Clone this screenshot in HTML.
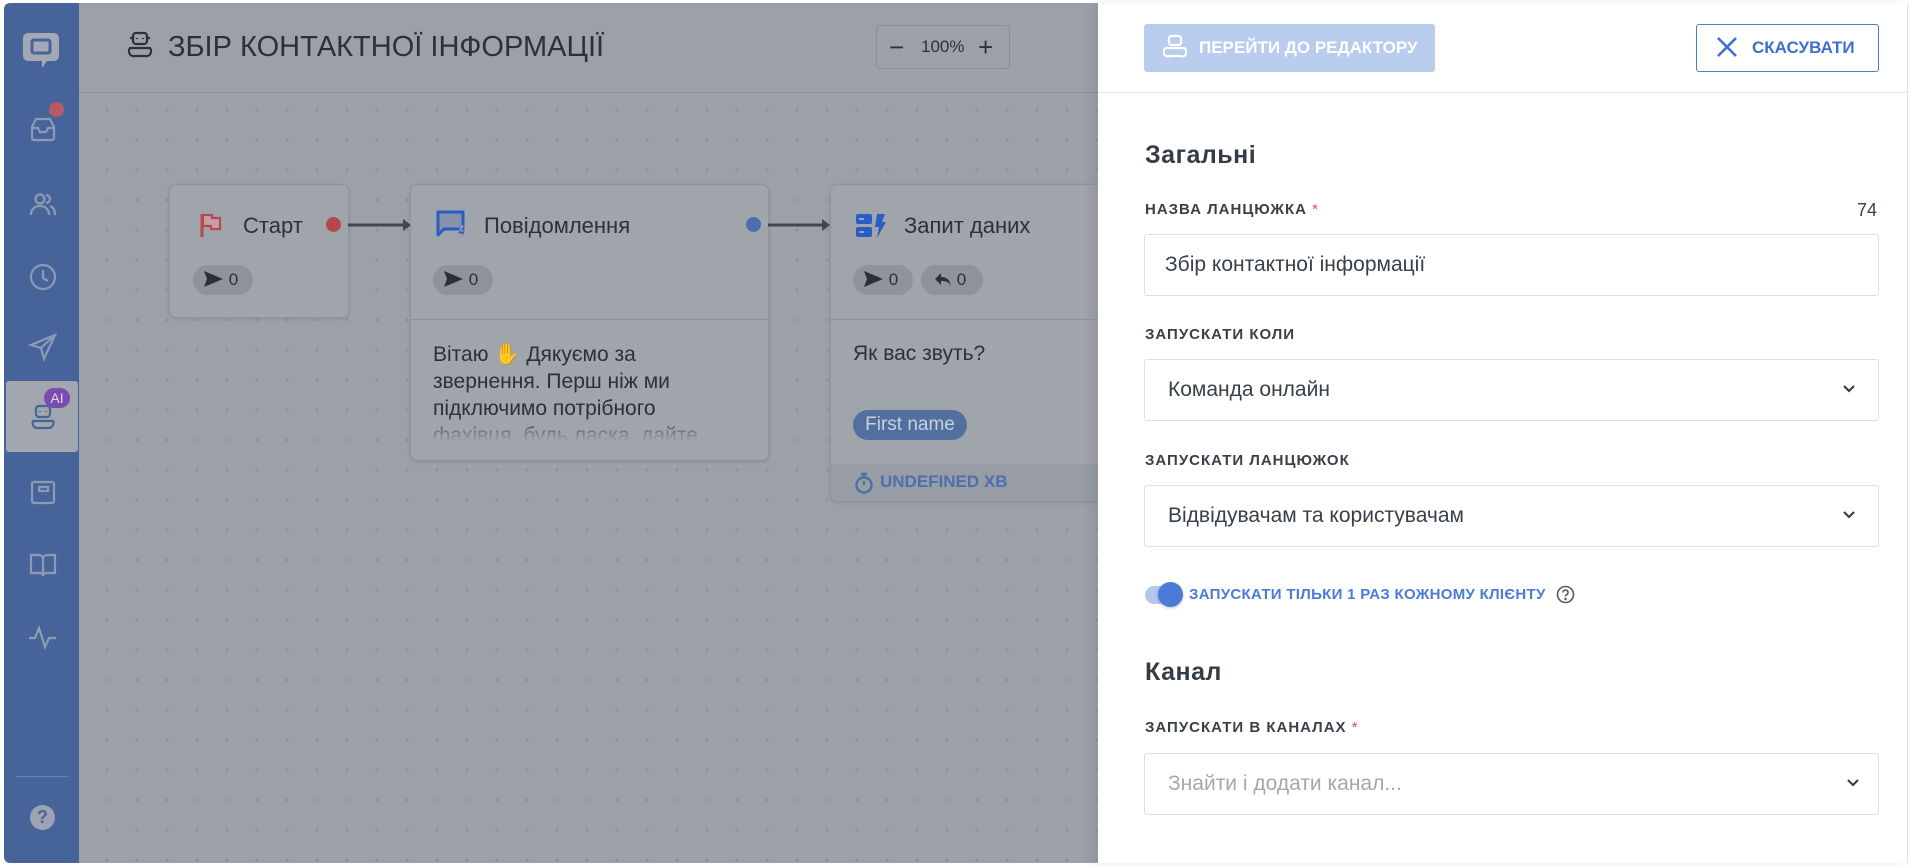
<!DOCTYPE html>
<html><head><meta charset="utf-8">
<style>
*{box-sizing:border-box;margin:0;padding:0}
body{width:1911px;height:867px;background:#fff;font-family:"Liberation Sans",sans-serif;position:relative;overflow:hidden;color:#2b313b}
.abs{position:absolute}
#side{left:4px;top:3px;width:75px;height:860px;background:#47649a;border-radius:6px 0 0 6px}
#canvas{left:79px;top:3px;width:1020px;height:860px;background-color:#9ca0a8;
background-image:radial-gradient(circle,#8d9199 1.3px,transparent 1.6px);background-size:30px 30px;background-position:13px 2px}
#hdr{left:79px;top:3px;width:1020px;height:90px;background:#9ca0a8;border-bottom:1px solid #8f939b}
.node{background:#a0a4ab;border:1px solid #8f939b;border-radius:7px;box-shadow:0 1px 3px rgba(0,0,0,.12)}
.pill{position:absolute;height:30px;border-radius:15px;background:#8f939a;font-size:17px;color:#2b313b;line-height:30px;padding-left:10px}
.ntitle{position:absolute;font-size:22px;color:#2b313b}
#panel{left:1098px;top:3px;width:810px;height:860px;background:#fff;box-shadow:-6px 0 12px rgba(0,0,0,.08);border-right:1px solid #e3e3e3}
.lbl{position:absolute;left:1145px;font-size:15px;letter-spacing:1px;color:#3a4049;font-weight:bold}
.inp{position:absolute;left:1144px;width:735px;height:62px;border:1px solid #dcdfe4;border-radius:3px;font-size:21px;color:#3a4049;line-height:60px;padding-left:23px}
.chev{position:absolute;right:22px;top:24px}
.h2{position:absolute;left:1145px;font-size:25px;font-weight:bold;color:#363c45;letter-spacing:.5px}
.star{color:#e05252;font-weight:normal}
</style></head><body>
<div id="side" class="abs">
 <svg class="abs" style="left:18px;top:28px" width="40" height="44" viewBox="0 0 40 44"><path d="M6 2h26a5 5 0 0 1 5 5v18a5 5 0 0 1-5 5h-7l-5 7v-7H6a5 5 0 0 1-5-5V7a5 5 0 0 1 5-5z" fill="#a3a8b2"/><rect x="10" y="9" width="18" height="13" rx="2" fill="none" stroke="#47649a" stroke-width="3"/></svg>
 <svg class="abs" style="left:24px;top:112px" width="30" height="30" viewBox="0 0 30 30" fill="none" stroke="#8d9ab4" stroke-width="2.2"><path d="M4 12l4-8h14l4 8v11a2 2 0 0 1-2 2H6a2 2 0 0 1-2-2z"/><path d="M4 13h6l2 4h6l2-4h6"/></svg>
 <div class="abs" style="left:45px;top:99px;width:15px;height:15px;border-radius:50%;background:#b65a63"></div>
 <svg class="abs" style="left:24px;top:187px" width="30" height="30" viewBox="0 0 30 30" fill="none" stroke="#8d9ab4" stroke-width="2.2"><circle cx="12" cy="9" r="4.5"/><path d="M3 25c0-6 4-9 9-9s9 3 9 9"/><path d="M18 5a4 4 0 0 1 0 8M22 16c3 1 5 4 5 9"/></svg>
 <svg class="abs" style="left:24px;top:259px" width="30" height="30" viewBox="0 0 30 30" fill="none" stroke="#8d9ab4" stroke-width="2.2"><circle cx="15" cy="15" r="12"/><path d="M15 8v8l5 3"/></svg>
 <svg class="abs" style="left:24px;top:329px" width="30" height="30" viewBox="0 0 30 30" fill="none" stroke="#8d9ab4" stroke-width="2.2"><path d="M27 3L3 13l10 3 3 11z"/><path d="M13 16L27 3"/></svg>
 <div class="abs" style="left:2px;top:378px;width:72px;height:71px;background:#a2a6ae;border-radius:3px"></div>
 <svg class="abs" style="left:24px;top:400px" width="30" height="30" viewBox="0 0 30 30" fill="none" stroke="#47649a" stroke-width="2.2"><rect x="8" y="3" width="14" height="11" rx="3"/><path d="M5 18h20a5 5 0 0 1-5 7h-10a5 5 0 0 1-5-7z"/><path d="M12 8v1M18 8v1"/></svg>
 <div class="abs" style="left:40px;top:385px;width:26px;height:20px;border-radius:10px;background:#7a4bb0;color:#ddd;font-size:14px;text-align:center;line-height:20px">AI</div>
 <svg class="abs" style="left:24px;top:475px" width="30" height="30" viewBox="0 0 30 30" fill="none" stroke="#8d9ab4" stroke-width="2.2"><rect x="4" y="4" width="22" height="21" rx="2"/><rect x="11" y="9" width="9" height="4"/></svg>
 <svg class="abs" style="left:24px;top:547px" width="30" height="30" viewBox="0 0 30 30" fill="none" stroke="#8d9ab4" stroke-width="2.2"><path d="M3 5h8a4 4 0 0 1 4 4v17a3 3 0 0 0-3-3H3zM27 5h-8a4 4 0 0 0-4 4v17a3 3 0 0 1 3-3h9z"/></svg>
 <svg class="abs" style="left:24px;top:620px" width="30" height="30" viewBox="0 0 30 30" fill="none" stroke="#8d9ab4" stroke-width="2.2"><path d="M1 15h6l4-10 6 19 4-9h7"/></svg>
 <div class="abs" style="left:11px;top:773px;width:54px;height:1px;background:#6d80a8"></div>
 <div class="abs" style="left:26px;top:802px;width:25px;height:25px;border-radius:50%;background:#9ba3b4;color:#47649a;font-weight:bold;font-size:18px;text-align:center;line-height:25px">?</div>
</div>

<div id="canvas" class="abs"></div>
<div id="hdr" class="abs"></div>
<svg class="abs" style="left:126px;top:31px" width="28" height="30" viewBox="0 0 28 30" fill="none" stroke="#2b313b" stroke-width="2.2"><rect x="7" y="2" width="14" height="11" rx="3"/><path d="M4 17h20a5 5 0 0 1-5 8H9a5 5 0 0 1-5-8z"/><path d="M11 7v1M17 7v1M4 7h3M21 7h3"/></svg>
<div class="abs" style="left:168px;top:31px;font-size:29px;color:#2b313b">ЗБІР КОНТАКТНОЇ ІНФОРМАЦІЇ</div>
<div class="abs" style="left:876px;top:25px;width:134px;height:44px;border:1px solid #8a8e96;border-radius:4px;font-size:17px;color:#2b313b;line-height:42px">
 <span class="abs" style="left:12px;font-size:26px">−</span><span class="abs" style="left:44px">100%</span><span class="abs" style="left:101px;font-size:26px">+</span></div>

<div class="node abs" style="left:169px;top:184px;width:180px;height:134px"></div>
<svg class="abs" style="left:199px;top:212px" width="24" height="26" viewBox="0 0 24 26"><path d="M3 2v23" stroke="#b74a4e" stroke-width="3"/><path d="M4 3h9v3h8v11h-9v-3H4z" fill="#c4a0a4" stroke="#b74a4e" stroke-width="2.2"/></svg>
<div class="ntitle" style="left:243px;top:213px">Старт</div>
<div class="abs" style="left:326px;top:217px;width:15px;height:15px;border-radius:50%;background:#b4494c"></div>
<svg class="abs" style="left:348px;top:217px" width="64" height="16"><path d="M0 8h58" stroke="#3f4650" stroke-width="3"/><path d="M55 2l8 6-8 6z" fill="#3f4650"/></svg>
<div class="pill" style="left:193px;top:265px;width:60px"><svg width="21" height="18" viewBox="0 0 21 18" style="vertical-align:-3px"><path d="M1 1l19 8-19 8 3-8z" fill="#2b313b"/></svg> 0</div>

<div class="node abs" style="left:410px;top:184px;width:359px;height:277px"></div>
<div class="abs" style="left:410px;top:319px;width:359px;height:1px;background:#8f939b"></div>
<svg class="abs" style="left:435px;top:209px" width="34" height="32" viewBox="0 0 34 32"><path d="M3 3h25v17H9l-6 6z" fill="#8592aa" stroke="#2a5bc7" stroke-width="3" stroke-linejoin="round"/><path d="M27 17l-5 8h5l-3 7 7-10h-5l2-5z" fill="#2a5bc7" stroke="#a0a4ab" stroke-width="1"/></svg>
<div class="ntitle" style="left:484px;top:213px">Повідомлення</div>
<div class="abs" style="left:746px;top:217px;width:15px;height:15px;border-radius:50%;background:#4c6fae"></div>
<svg class="abs" style="left:768px;top:217px" width="64" height="16"><path d="M0 8h56" stroke="#3f4650" stroke-width="3"/><path d="M54 2l8 6-8 6z" fill="#3f4650"/></svg>
<div class="pill" style="left:433px;top:265px;width:60px"><svg width="21" height="18" viewBox="0 0 21 18" style="vertical-align:-3px"><path d="M1 1l19 8-19 8 3-8z" fill="#2b313b"/></svg> 0</div>
<div class="abs" style="left:433px;top:341px;width:268px;height:100px;overflow:hidden;font-size:21px;line-height:27px;color:#2b313b;-webkit-mask-image:linear-gradient(#000 75%,transparent 100%)">Вітаю <span style="color:#8a6a3a">✋</span> Дякуємо за звернення. Перш ніж ми підключимо потрібного фахівця, будь ласка, дайте</div>

<div class="node abs" style="left:830px;top:184px;width:290px;height:318px;overflow:hidden">
 <div class="abs" style="left:0;top:134px;width:290px;height:1px;background:#8f939b"></div>
 <div class="abs" style="left:0;top:279px;width:290px;height:40px;background:#979ca5"></div>
</div>
<svg class="abs" style="left:855px;top:213px" width="32" height="26" viewBox="0 0 32 26"><rect x="1" y="1" width="16" height="10" rx="2" fill="#2a5bc7"/><rect x="1" y="14" width="16" height="10" rx="2" fill="#2a5bc7"/><rect x="4" y="5" width="5" height="2" fill="#a0a4ab"/><rect x="4" y="18" width="5" height="2" fill="#a0a4ab"/><path d="M22 1h8l-3 8h4l-9 16 2-11h-4z" fill="#2a5bc7"/></svg>
<div class="ntitle" style="left:904px;top:213px">Запит даних</div>
<div class="pill" style="left:853px;top:265px;width:60px"><svg width="21" height="18" viewBox="0 0 21 18" style="vertical-align:-3px"><path d="M1 1l19 8-19 8 3-8z" fill="#2b313b"/></svg> 0</div>
<div class="pill" style="left:921px;top:265px;width:62px;padding-left:13px"><svg width="18" height="16" viewBox="0 0 18 16" style="vertical-align:-2px"><path d="M7 2L1 8l6 6V10c5 0 8 1 10 5-1-6-4-9-10-9z" fill="#2b313b"/></svg> 0</div>
<div class="abs" style="left:853px;top:342px;font-size:21px;color:#2b313b">Як вас звуть?</div>
<div class="abs" style="left:853px;top:410px;width:114px;height:30px;border-radius:15px;background:#52709f;color:#c8d0de;font-size:19px;line-height:30px;text-align:center">First name</div>
<svg class="abs" style="left:854px;top:472px" width="20" height="22" viewBox="0 0 20 22" fill="none" stroke="#4c6fae" stroke-width="2.4"><circle cx="10" cy="13" r="7.5"/><path d="M7 2h6M10 2v4M10 13V9"/></svg>
<div class="abs" style="left:880px;top:472px;font-size:17px;font-weight:bold;color:#4c6fae">UNDEFINED ХВ</div>

<div id="panel" class="abs"></div>
<div class="abs" style="left:1098px;top:92px;width:810px;height:1px;background:#e3e3e3"></div>
<div class="abs" style="left:1144px;top:24px;width:291px;height:48px;background:#b8cdee;border-radius:3px;color:#fff;font-weight:bold;font-size:17px;line-height:48px;padding-left:55px">ПЕРЕЙТИ ДО РЕДАКТОРУ</div>
<svg class="abs" style="left:1163px;top:34px" width="24" height="27" viewBox="0 0 24 27" fill="none" stroke="#fff" stroke-width="2.2"><rect x="6" y="2" width="12" height="9" rx="2.5"/><path d="M3 14h18a4 4 0 0 1-4 8H7a4 4 0 0 1-4-8z"/></svg>
<div class="abs" style="left:1696px;top:24px;width:183px;height:48px;border:1.5px solid #4a7bd6;border-radius:3px;color:#3d6fd1;font-weight:bold;font-size:17px;line-height:45px;padding-left:55px">СКАСУВАТИ</div>
<svg class="abs" style="left:1716px;top:36px" width="22" height="22" viewBox="0 0 22 22" stroke="#3d6fd1" stroke-width="2.6"><path d="M2 2l18 18M20 2L2 20"/></svg>

<div class="h2" style="top:141px">Загальні</div>
<div class="lbl" style="top:201px">НАЗВА ЛАНЦЮЖКА <span class="star">*</span></div>
<div class="abs" style="left:1857px;top:200px;font-size:18px;color:#3a4049">74</div>
<div class="inp" style="top:234px;padding-left:20px">Збір контактної інформації</div>

<div class="lbl" style="top:326px">ЗАПУСКАТИ КОЛИ</div>
<div class="inp" style="top:359px">Команда онлайн<svg class="chev" width="14" height="10" viewBox="0 0 14 10" fill="none" stroke="#3a4049" stroke-width="2.2"><path d="M2 2l5 5 5-5"/></svg></div>

<div class="lbl" style="top:452px">ЗАПУСКАТИ ЛАНЦЮЖОК</div>
<div class="inp" style="top:485px">Відвідувачам та користувачам<svg class="chev" width="14" height="10" viewBox="0 0 14 10" fill="none" stroke="#3a4049" stroke-width="2.2"><path d="M2 2l5 5 5-5"/></svg></div>

<div class="abs" style="left:1145px;top:586px;width:36px;height:18px;border-radius:9px;background:#b3c6ee"></div>
<div class="abs" style="left:1158px;top:582px;width:25px;height:25px;border-radius:50%;background:#4a7bd6;box-shadow:0 1px 3px rgba(0,0,0,.25)"></div>
<div class="abs" style="left:1189px;top:586px;font-size:15px;font-weight:bold;color:#4a7bd6;letter-spacing:.3px">ЗАПУСКАТИ ТІЛЬКИ 1 РАЗ КОЖНОМУ КЛІЄНТУ</div>
<svg class="abs" style="left:1556px;top:585px" width="19" height="19" viewBox="0 0 19 19" fill="none" stroke="#555b64" stroke-width="1.6"><circle cx="9.5" cy="9.5" r="8"/><path d="M7 7.5a2.5 2.5 0 1 1 3.5 2.3c-.8.4-1 .9-1 1.7"/><circle cx="9.5" cy="14" r=".5" fill="#555b64"/></svg>

<div class="h2" style="top:658px">Канал</div>
<div class="lbl" style="top:719px">ЗАПУСКАТИ В КАНАЛАХ <span class="star">*</span></div>
<div class="inp" style="top:753px;color:#a3a8af">Знайти і додати канал...<svg class="chev" width="14" height="10" viewBox="0 0 14 10" fill="none" stroke="#3a4049" stroke-width="2.2" style="right:18px"><path d="M2 2l5 5 5-5"/></svg></div>
</body></html>
